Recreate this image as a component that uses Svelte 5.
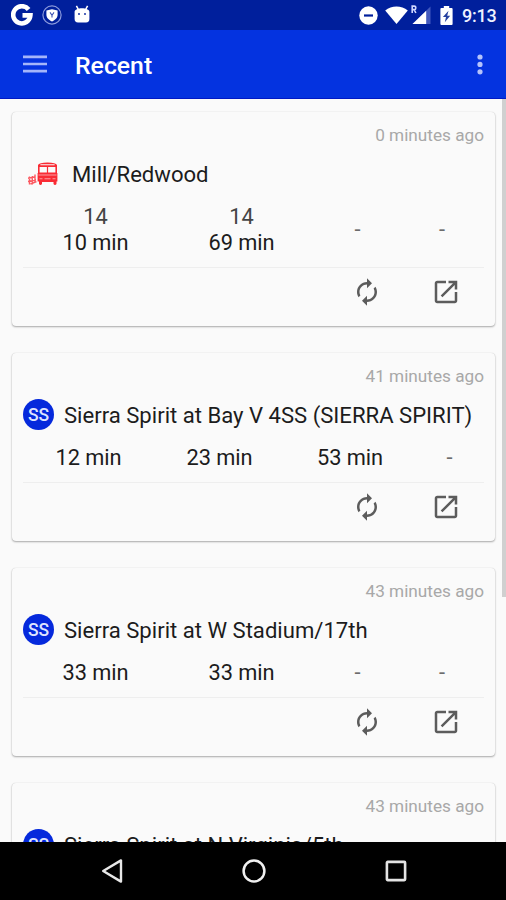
<script>
	let stops = [
		{
			id: 1,
			name: 'Mill/Redwood',
			icon: 'bus',
			ago: '0 minutes ago',
			times: [
				{ route: '14', text: '10 min' },
				{ route: '14', text: '69 min' },
				{ text: '-' },
				{ text: '-' },
			],
		},
		{
			id: 2,
			name: 'Sierra Spirit at Bay V 4SS (SIERRA SPIRIT)',
			icon: 'spirit',
			ago: '41 minutes ago',
			times: [{ text: '12 min' }, { text: '23 min' }, { text: '53 min' }, { text: '-' }],
		},
		{
			id: 3,
			name: 'Sierra Spirit at W Stadium/17th',
			icon: 'spirit',
			ago: '43 minutes ago',
			times: [{ text: '33 min' }, { text: '33 min' }, { text: '-' }, { text: '-' }],
		},
		{
			id: 4,
			name: 'Sierra Spirit at N Virginia/5th',
			icon: 'spirit',
			ago: '43 minutes ago',
			times: [],
		},
	];

	const isWide = times => times.filter(time => time.text !== '-').length > 2;
</script>

<div class="screen">
	<!-- status bar -->
	<div class="status">
		<svg class="google" width="22" height="22" viewBox="0 0 22 22">
			<path d="M17.6 5.5A8.6 8.6 0 1 0 19.4 11.4H11.5" fill="none" stroke="#fff" stroke-width="4.6" />
		</svg>
		<svg class="shield" width="20" height="20" viewBox="0 0 20 20">
			<circle cx="10" cy="10" r="9.1" fill="none" stroke="#8c9bdc" stroke-width="1.2" />
			<path d="M10 4.2L15.6 5.6V9.5C15.6 13 13 15.2 10 16.4C7 15.2 4.4 13 4.4 9.5V5.6Z" fill="#fff" />
			<path d="M8 7.4L10 10.2L12 7.4M10 10V12.6" fill="none" stroke="#4056b5" stroke-width="1.1" />
		</svg>
		<svg class="droid" width="16" height="18" viewBox="0 0 16 18">
			<path d="M2.4 0.8L4.2 4.2M13.6 0.8L11.8 4.2" stroke="#fff" stroke-width="1.5" />
			<path d="M0.6 7C0.6 2 15.4 2 15.4 7V14Q15.4 17.4 12 17.4H4Q0.6 17.4 0.6 14Z" fill="#fff" />
			<circle cx="5" cy="9" r="0.9" fill="#001f9c" />
			<circle cx="11" cy="9" r="0.9" fill="#001f9c" />
		</svg>

		<div class="system">
			<svg width="19" height="19" viewBox="0 0 19 19">
				<circle cx="9.5" cy="9.5" r="9.2" fill="#fff" />
				<path d="M5 9.5H14" stroke="#001f9c" stroke-width="2.2" />
			</svg>
			<svg class="wifi" width="23" height="18" viewBox="0 0 23 18">
				<path d="M0.2 4.5C6.5 -0.9 16.5 -0.9 22.8 4.5L11.5 18Z" fill="#fff" />
			</svg>
			<svg class="signal" width="20" height="19" viewBox="0 0 20 19">
				<path d="M19.5 1.5V19H1.5Z" fill="#4259bd" />
				<path d="M15.2 5.7V19H1.5Z" fill="#fff" />
				<path d="M1.2 8V1.1H3.3Q4.8 1.1 4.8 2.9Q4.8 4.6 3.2 4.6H1.2M3.1 4.6L4.9 8" fill="none" stroke="#cfd7ff" stroke-width="1.6" />
			</svg>
			<svg class="battery" width="13" height="19" viewBox="0 0 13 19">
				<path d="M3.8 0H9.2V2H11.6Q12.6 2 12.6 3V18Q12.6 19 11.6 19H1.4Q0.4 19 0.4 18V3Q0.4 2 1.4 2H3.8Z" fill="#fff" />
				<path d="M8.5 4.7L2.9 11H6L4.8 16.2L10.2 9.7H7.2Z" fill="#26409f" />
			</svg>
			<span class="clock">9:13</span>
		</div>
	</div>

	<!-- app bar -->
	<header>
		<svg width="24" height="18" viewBox="0 0 24 18">
			<path d="M0 1.9H24M0 9H24M0 16.1H24" stroke="#a4b5fa" stroke-width="2.6" />
		</svg>
		<h1>Recent</h1>
		<svg class="more" width="6" height="21" viewBox="0 0 6 21">
			<circle cx="3" cy="3" r="2.6" fill="#b5c3fb" />
			<circle cx="3" cy="10.4" r="2.6" fill="#b5c3fb" />
			<circle cx="3" cy="17.8" r="2.6" fill="#b5c3fb" />
		</svg>
	</header>

	<!-- recent stops -->
	<div class="content">
		<main>
			{#each stops as stop (stop.id)}
				<section class="card">
					<p class="ago">{stop.ago}</p>
					<div class="stop" class:with-bus={stop.icon === 'bus'}>
						{#if stop.icon === 'bus'}
							<svg class="bus" width="31" height="24" viewBox="0 0 31 24">
								<path
									fill="#f92b34"
									fill-rule="evenodd"
									d="M10 3Q11 0.6 19.5 0.4Q28 0.6 29 3V11H29.4V19.5H28.5V22Q27 24 25.5 22V20H14V22Q12.5 24 11 22V19.5H9.6V11H10ZM11.6 5V10.5H18.9V5ZM20.1 5V10.5H27.4V5ZM12.4 2.3V3.2H26.6V2.3Z"
								/>
								<path
									d="M10.5 13H28.5M11.5 16.8H14.5M24.5 16.8H27.5M16.5 16.8H22.5"
									fill="none"
									stroke="#fc9ca0"
									stroke-width="1.1"
								/>
								<path
									d="M1.5 14.5V22.5M4.3 14V22.5M0 16.3L7.5 14.8M0 19.5L8 18M7 12.5V20M2.5 22L8.5 19.6"
									fill="none"
									stroke="#fb5960"
									stroke-width="1.4"
								/>
							</svg>
						{:else}
							<span class="badge">SS</span>
						{/if}
						<h2>{stop.name}</h2>
					</div>
					{#if stop.times.length}
						<div class="times" class:wide={isWide(stop.times)}>
							{#each stop.times as time}
								<div class="time" class:empty={time.text === '-'}>
									{#if time.route}<span class="route">{time.route}</span>{/if}
									<span>{time.text}</span>
								</div>
							{/each}
						</div>
					{/if}
					<div class="actions">
						<svg width="30" height="30" viewBox="0 0 24 24" fill="#5c5c5c">
							<path d="M12 6v3l4-4-4-4v3c-4.42 0-8 3.58-8 8 0 1.57.46 3.03 1.24 4.26L6.7 14.8c-.45-.83-.7-1.79-.7-2.8 0-3.31 2.69-6 6-6zm6.76 1.74L17.3 9.2c.44.84.7 1.79.7 2.8 0 3.31-2.69 6-6 6v-3l-4 4 4 4v-3c4.42 0 8-3.58 8-8 0-1.57-.46-3.03-1.24-4.26z" />
						</svg>
						<svg width="30" height="30" viewBox="0 0 24 24" fill="#5c5c5c">
							<path d="M19 19H5V5h7V3H5c-1.11 0-2 .9-2 2v14c0 1.1.89 2 2 2h14c1.1 0 2-.9 2-2v-7h-2v7zM14 3v2h3.59l-9.83 9.83 1.41 1.41L19 6.41V10h2V3h-7z" />
						</svg>
					</div>
				</section>
			{/each}
		</main>
		<div class="scrollbar"></div>
	</div>

	<!-- navigation bar -->
	<nav>
		<svg width="22" height="24" viewBox="0 0 22 24">
			<path d="M20 1.4V22.6L2.2 12Z" fill="none" stroke="#e8e8e8" stroke-width="2.4" stroke-linejoin="round" />
		</svg>
		<svg width="24" height="24" viewBox="0 0 24 24">
			<circle cx="12" cy="12" r="10.4" fill="none" stroke="#f0f0f0" stroke-width="2.5" />
		</svg>
		<svg width="22" height="22" viewBox="0 0 22 22">
			<rect x="1.9" y="1.9" width="18.2" height="18.2" rx="0.8" fill="none" stroke="#e4e4e4" stroke-width="2.6" />
		</svg>
	</nav>
</div>

<style>
	:global(body) {
		margin: 0;
		background: #fafafa;
	}

	.screen {
		width: 506px;
		height: 900px;
		display: flex;
		flex-direction: column;
		overflow: hidden;
		font-family: Roboto, sans-serif;
		color: #1c1c1c;
	}

	h1,
	h2,
	p {
		margin: 0;
		font-weight: 400;
	}

	svg {
		display: block;
		flex-shrink: 0;
	}

	.status {
		box-sizing: border-box;
		height: 30px;
		flex-shrink: 0;
		display: flex;
		align-items: center;
		padding: 0 9px 0 11px;
		background: #001f9c;
	}

	.shield {
		margin-left: 9px;
	}

	.droid {
		margin: 0 0 2px 12px;
	}

	.system {
		display: flex;
		align-items: center;
		margin-left: auto;
	}

	.wifi {
		margin-left: 7px;
	}

	.signal {
		margin: 0 0 1px 3px;
	}

	.battery {
		margin-left: 9px;
	}

	.clock {
		margin: 2px 0 0 9px;
		width: 35px;
		font-size: 18px;
		font-weight: 500;
		line-height: 28px;
		letter-spacing: -0.2px;
		white-space: nowrap;
		color: #eef1ff;
	}

	header {
		box-sizing: border-box;
		height: 69px;
		flex-shrink: 0;
		display: flex;
		align-items: center;
		padding: 0 23px;
		background: #0433e0;
		border-bottom: 1px solid #0019c4;
	}

	h1 {
		margin-left: 28px;
		font-size: 24.8px;
		font-weight: 500;
		line-height: 32px;
		padding-top: 4px;
		color: #fff;
	}

	.more {
		margin-left: auto;
	}

	.content {
		flex: 1;
		min-height: 0;
		display: flex;
		background: #fafafa;
		overflow: hidden;
	}

	main {
		flex: 1;
		display: flex;
		flex-direction: column;
		gap: 27px;
		padding: 13px 7px 0 12px;
	}

	.scrollbar {
		width: 4px;
		height: 498px;
		background: #d0d0d0;
	}

	.card {
		box-sizing: border-box;
		flex-shrink: 0;
		padding: 10px 11px 0;
		border-radius: 4px;
		background: #fafafa;
		box-shadow: 0 1px 2px rgba(0, 0, 0, 0.32), 0 0 1px rgba(0, 0, 0, 0.18);
	}

	.ago {
		font-size: 17.2px;
		line-height: 26px;
		text-align: right;
		color: #a8a8a8;
	}

	.stop {
		display: flex;
		align-items: center;
		height: 50px;
	}

	.bus {
		margin-left: 5px;
	}

	.badge {
		width: 31px;
		height: 31px;
		flex-shrink: 0;
		border-radius: 50%;
		background: #0529dc;
		color: #dfe4ff;
		font-size: 17.5px;
		font-weight: 500;
		line-height: 32px;
		text-align: center;
	}

	h2 {
		margin-left: 10px;
		font-size: 22.1px;
		line-height: 26px;
		padding-top: 2px;
		white-space: nowrap;
	}

	.with-bus {
		height: 52px;
	}

	.with-bus h2 {
		margin-left: 13px;
		padding-top: 0;
	}

	.times {
		display: grid;
		grid-template-columns: 145px 147px 85px 1fr;
		align-items: center;
		padding: 6px 0 11px;
		border-bottom: 1px solid #eeeeee;
		font-size: 21.8px;
		line-height: 26px;
		letter-spacing: -0.1px;
		text-align: center;
	}

	.with-bus + .times {
		padding-top: 4px;
	}

	.times.wide {
		grid-template-columns: 131px 131px 130px 1fr;
	}

	.time {
		display: flex;
		flex-direction: column;
	}

	.route {
		color: #444;
	}

	.empty {
		color: #6c6c6c;
	}

	.actions {
		box-sizing: border-box;
		height: 58px;
		display: flex;
		justify-content: flex-end;
		gap: 49px;
		padding: 8.5px 23.5px 0 0;
	}

	nav {
		box-sizing: border-box;
		height: 58px;
		flex-shrink: 0;
		display: flex;
		align-items: center;
		justify-content: space-between;
		padding: 0 99px 0 101px;
		background: #000;
	}
</style>
